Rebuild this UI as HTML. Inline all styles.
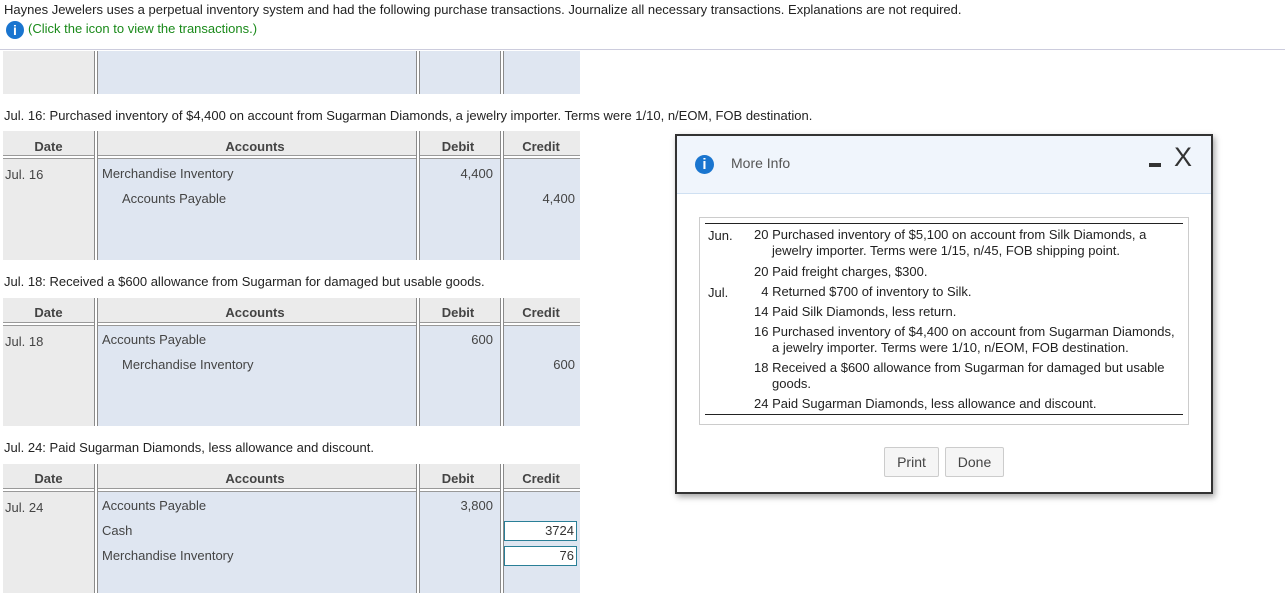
<!DOCTYPE html>
<html><head><meta charset="utf-8"><style>
*{margin:0;padding:0;box-sizing:border-box}
body{width:1285px;height:600px;background:#fff;font-family:"Liberation Sans",sans-serif;font-size:13px;color:#333;position:relative;overflow:hidden}
.a{position:absolute;white-space:nowrap}
.hd{background:#ebebeb}
.gr{background:#ebebeb}
.bl{background:#dfe6f1}
.vl{position:absolute;width:4px;border-left:1px solid #8a8a8a;border-right:1px solid #8a8a8a;background:#fff}
.hl{position:absolute;height:4px;border-top:1px solid #999;border-bottom:1px solid #999;background:#fff;left:3px;width:577px}
.th{position:absolute;font-weight:bold;color:#444;text-align:center}
.tx{position:absolute;color:#444;white-space:nowrap}
.inp{position:absolute;left:504px;width:73px;height:20px;border:1px solid #2a7f97;background:#fff;text-align:right;padding-right:2px;line-height:18px;color:#333}
.info{position:absolute;border-radius:50%;background:#1a75cf;color:#fff;font-weight:bold;font-family:"Liberation Sans",sans-serif;text-align:center}
.btn{position:absolute;border:1px solid #ccc;background:#f5f5f5;border-radius:2px;text-align:center;line-height:28px;font-size:14px;color:#444}
</style></head><body>
<div class="a" style="left:4px;top:2px;color:#222">Haynes Jewelers uses a perpetual inventory system and had the following purchase transactions. Journalize all necessary transactions. Explanations are not required.</div>
<div class="info" style="left:6px;top:21px;width:18px;height:18px;font-size:14px;line-height:18px">i</div>
<div class="a" style="left:28px;top:21px;color:#1a8a1a">(Click the icon to view the transactions.)</div>
<div class="a" style="left:0;top:49px;width:1285px;height:1px;background:#ccd"></div>

<div class="a gr" style="left:3px;top:51px;width:91px;height:43px"></div>
<div class="a bl" style="left:94px;top:51px;width:486px;height:43px"></div>
<div class="vl" style="left:94px;top:51px;height:43px"></div>
<div class="vl" style="left:416px;top:51px;height:43px"></div>
<div class="vl" style="left:500px;top:51px;height:43px"></div>

<div class="a" style="left:4px;top:108px;color:#222">Jul. 16: Purchased inventory of $4,400 on account from Sugarman Diamonds, a jewelry importer. Terms were 1/10, n/EOM, FOB destination.</div>
<div class="a hd" style="left:3px;top:131px;width:577px;height:25px"></div>
<div class="a gr" style="left:3px;top:159px;width:91px;height:101px"></div>
<div class="a bl" style="left:94px;top:159px;width:486px;height:101px"></div>
<div class="hl" style="top:155px"></div>
<div class="vl" style="left:94px;top:131px;height:129px"></div>
<div class="vl" style="left:416px;top:131px;height:129px"></div>
<div class="vl" style="left:500px;top:131px;height:129px"></div>
<div class="th" style="left:3px;width:91px;top:139px">Date</div>
<div class="th" style="left:96px;width:318px;top:139px">Accounts</div>
<div class="th" style="left:418px;width:80px;top:139px">Debit</div>
<div class="th" style="left:503px;width:76px;top:139px">Credit</div>
<div class="tx" style="left:5px;top:167px">Jul. 16</div>
<div class="tx" style="left:102px;top:166px">Merchandise Inventory</div>
<div class="tx" style="left:420px;width:73px;text-align:right;top:166px">4,400</div>
<div class="tx" style="left:122px;top:191px">Accounts Payable</div>
<div class="tx" style="left:504px;width:71px;text-align:right;top:191px">4,400</div>

<div class="a" style="left:4px;top:274px;color:#222">Jul. 18: Received a $600 allowance from Sugarman for damaged but usable goods.</div>
<div class="a hd" style="left:3px;top:298px;width:577px;height:25px"></div>
<div class="a gr" style="left:3px;top:326px;width:91px;height:100px"></div>
<div class="a bl" style="left:94px;top:326px;width:486px;height:100px"></div>
<div class="hl" style="top:322px"></div>
<div class="vl" style="left:94px;top:298px;height:128px"></div>
<div class="vl" style="left:416px;top:298px;height:128px"></div>
<div class="vl" style="left:500px;top:298px;height:128px"></div>
<div class="th" style="left:3px;width:91px;top:305px">Date</div>
<div class="th" style="left:96px;width:318px;top:305px">Accounts</div>
<div class="th" style="left:418px;width:80px;top:305px">Debit</div>
<div class="th" style="left:503px;width:76px;top:305px">Credit</div>
<div class="tx" style="left:5px;top:334px">Jul. 18</div>
<div class="tx" style="left:102px;top:332px">Accounts Payable</div>
<div class="tx" style="left:420px;width:73px;text-align:right;top:332px">600</div>
<div class="tx" style="left:122px;top:357px">Merchandise Inventory</div>
<div class="tx" style="left:504px;width:71px;text-align:right;top:357px">600</div>

<div class="a" style="left:4px;top:440px;color:#222">Jul. 24: Paid Sugarman Diamonds, less allowance and discount.</div>
<div class="a hd" style="left:3px;top:464px;width:577px;height:25px"></div>
<div class="a gr" style="left:3px;top:492px;width:91px;height:101px"></div>
<div class="a bl" style="left:94px;top:492px;width:486px;height:101px"></div>
<div class="hl" style="top:488px"></div>
<div class="vl" style="left:94px;top:464px;height:129px"></div>
<div class="vl" style="left:416px;top:464px;height:129px"></div>
<div class="vl" style="left:500px;top:464px;height:129px"></div>
<div class="th" style="left:3px;width:91px;top:471px">Date</div>
<div class="th" style="left:96px;width:318px;top:471px">Accounts</div>
<div class="th" style="left:418px;width:80px;top:471px">Debit</div>
<div class="th" style="left:503px;width:76px;top:471px">Credit</div>
<div class="tx" style="left:5px;top:500px">Jul. 24</div>
<div class="tx" style="left:102px;top:498px">Accounts Payable</div>
<div class="tx" style="left:420px;width:73px;text-align:right;top:498px">3,800</div>
<div class="tx" style="left:102px;top:523px">Cash</div>
<div class="inp" style="top:521px">3724</div>
<div class="tx" style="left:102px;top:548px">Merchandise Inventory</div>
<div class="inp" style="top:546px">76</div>

<div class="a" style="left:675px;top:134px;width:538px;height:360px;border:2px solid #333;background:#fff;box-shadow:2px 3px 6px rgba(0,0,0,.35)">
  <div class="a" style="left:0;top:0;width:534px;height:58px;background:#f0f5fc;border-bottom:1px solid #cfe0f2"></div>
  <div class="info" style="left:18px;top:19px;width:19px;height:19px;font-size:15px;line-height:19px">i</div>
  <div class="a" style="left:54px;top:19px;font-size:14px;color:#555">More Info</div>
  <div class="a" style="left:472px;top:27px;width:12px;height:4px;background:#333"></div>
  <div class="a" style="left:497px;top:6px;font-size:27px;color:#333;line-height:30px">X</div>
  <div class="a" style="left:22px;top:81px;width:490px;height:208px;border:1px solid #ccc">
    <div class="a" style="left:5px;top:5px;width:478px;height:1px;background:#222"></div>
    <div class="a" style="left:5px;top:196px;width:478px;height:1px;background:#222"></div>
    <div class="tx" style="left:8px;top:10px;color:#222">Jun.</div>
    <div class="tx" style="left:8px;top:67px;color:#222">Jul.</div>
    <div class="a" style="left:54px;top:9px;width:430px;color:#222;line-height:16px;white-space:normal">
      <div style="padding-left:18px;text-indent:-18px">20 Purchased inventory of $5,100 on account from Silk Diamonds, a jewelry importer. Terms were 1/15, n/45, FOB shipping point.</div>
      <div style="padding-left:18px;text-indent:-18px;margin-top:5px">20 Paid freight charges, $300.</div>
      <div style="padding-left:18px;text-indent:-18px;margin-top:4px">&nbsp;&nbsp;4 Returned $700 of inventory to Silk.</div>
      <div style="padding-left:18px;text-indent:-18px;margin-top:4px">14 Paid Silk Diamonds, less return.</div>
      <div style="padding-left:18px;text-indent:-18px;margin-top:4px">16 Purchased inventory of $4,400 on account from Sugarman Diamonds, a jewelry importer. Terms were 1/10, n/EOM, FOB destination.</div>
      <div style="padding-left:18px;text-indent:-18px;margin-top:4px">18 Received a $600 allowance from Sugarman for damaged but usable goods.</div>
      <div style="padding-left:18px;text-indent:-18px;margin-top:4px">24 Paid Sugarman Diamonds, less allowance and discount.</div>
    </div>
  </div>
  <div class="btn" style="left:207px;top:311px;width:55px;height:30px">Print</div>
  <div class="btn" style="left:268px;top:311px;width:59px;height:30px">Done</div>
</div>
</body></html>
